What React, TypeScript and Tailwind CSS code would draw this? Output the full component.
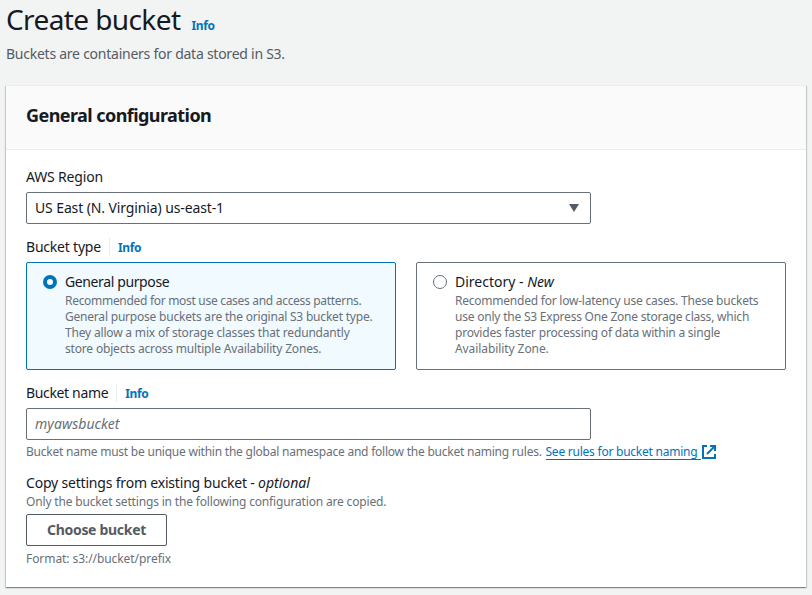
import React from 'react';

function Info({ className = '' }: { className?: string }) {
  return (
    <a className={`text-[12px] leading-5 font-bold tracking-[-0.36px] text-[#0073bb] ${className}`}>Info</a>
  );
}

function Label({ children, info = false }: { children: React.ReactNode; info?: boolean }) {
  return (
    <div className="mb-[5px] flex h-5 items-center text-[14px] leading-5 text-[#16191f]">
      {children}
      {info && (
        <>
          <span className="mr-2 ml-2 h-[18px] w-px bg-[#eaeded]" />
          <Info className="pt-[2px]" />
        </>
      )}
    </div>
  );
}

function Radio({ checked }: { checked: boolean }) {
  return checked ? (
    <span className="mt-[3px] size-[14px] shrink-0 rounded-full border-4 border-[#0073bb] bg-white" />
  ) : (
    <span className="mt-[3px] size-[14px] shrink-0 rounded-full border border-[#687078] bg-white" />
  );
}

function Tile({ checked, title, children }: { checked: boolean; title: React.ReactNode; children: React.ReactNode }) {
  return (
    <div
      className={`flex h-[108px] w-[370px] gap-2 rounded-[2px] border pt-[9px] pl-4 ${
        checked ? 'border-[#0073bb] bg-[#f1faff]' : 'border-[#687078] bg-white'
      }`}
    >
      <Radio checked={checked} />
      <div>
        <div className="h-[21px] text-[14px] leading-5 whitespace-pre text-[#16191f]">{title}</div>
        <div className="text-[12px] leading-4 whitespace-nowrap text-[#687078]">{children}</div>
      </div>
    </div>
  );
}

function ExternalIcon() {
  return (
    <svg className="size-4" viewBox="0 0 16 16" fill="none" stroke="#0073bb" strokeWidth="2">
      <path d="M6 2H2v12h12v-4" />
      <path d="M9 2h5v5" />
      <path d="M14 2 6 10" />
    </svg>
  );
}

export default function App() {
  return (
    <div className="h-[595px] overflow-hidden bg-[#f2f3f3] pt-px pl-[6px] font-['Noto_Sans',sans-serif]">
      <header className="h-[84px]">
        <div className="flex h-9 items-baseline">
          <h1 className="text-[28px] leading-9 tracking-[-0.6px] text-[#16191f]">Create bucket</h1>
          <Info className="ml-[11px]" />
        </div>
        <p className="mt-[7px] text-[14px] leading-5 tracking-[-0.25px] text-[#545b64]">
          Buckets are containers for data stored in S3.
        </p>
      </header>

      <section className="h-[502px] w-[800px] border-t border-[#eaeded] bg-white shadow-[0_1px_1px_0_rgba(0,28,36,0.3),1px_1px_1px_0_rgba(0,28,36,0.15),-1px_1px_1px_0_rgba(0,28,36,0.15)]">
        <div className="h-16 border-b border-[#eaeded] bg-[#fafafa] pt-[18px] pl-[20px]">
          <h2 className="text-[18px] leading-[22px] font-bold tracking-[-0.56px] text-[#16191f]">
            General configuration
          </h2>
        </div>

        <div className="pt-[17px] pl-5">
          <Label>
            <span className="tracking-[-0.169px]">AWS Region</span>
          </Label>
          <div className="mb-[13px] flex h-8 w-[565px] items-center justify-between rounded-[2px] border border-[#687078] pr-[11px] pl-2 text-[14px] leading-5 text-[#16191f]">
            <span className="tracking-[-0.115px]">US East (N. Virginia) us-east-1</span>
            <svg className="h-2 w-[10px]" viewBox="0 0 10 8">
              <path d="M0 0h10L5 8z" fill="#545b64" />
            </svg>
          </div>

          <Label info>
            <span className="tracking-[-0.21px]">Bucket type</span>
          </Label>
          <div className="mb-[13px] flex gap-5">
            <Tile checked title={<span className="tracking-[-0.38px]">General purpose</span>}>
              <p className="tracking-[-0.3px]">Recommended for most use cases and access patterns.</p>
              <p className="tracking-[-0.206px]">General purpose buckets are the original S3 bucket type.</p>
              <p className="tracking-[-0.18px]">They allow a mix of storage classes that redundantly</p>
              <p className="tracking-[-0.175px]">store objects across multiple Availability Zones.</p>
            </Tile>
            <Tile
              checked={false}
              title={
                <>
                  Directory - <em>New</em>
                </>
              }
            >
              <p className="tracking-[-0.228px]">Recommended for low-latency use cases. These buckets</p>
              <p className="tracking-[-0.215px]">use only the S3 Express One Zone storage class, which</p>
              <p className="tracking-[-0.21px]">provides faster processing of data within a single</p>
              <p className="tracking-[-0.08px]">Availability Zone.</p>
            </Tile>
          </div>

          <Label info>
            <span className="tracking-[-0.35px]">Bucket name</span>
          </Label>
          <div className="mb-1 flex h-8 w-[565px] items-center rounded-[2px] border border-[#687078] pl-2 text-[14px] leading-5 tracking-[0.068px] text-[#687078] italic">
            myawsbucket
          </div>
          <div className="mb-[13px] flex h-4 text-[12px] leading-4 whitespace-pre text-[#687078]">
            <span className="w-[519.5px] tracking-[-0.226px]">
              Bucket name must be unique within the global namespace and follow the bucket naming rules.
            </span>
            <a className="h-4 w-[155px] border-b border-[#0073bb] leading-4 tracking-[-0.235px] text-[#0073bb]">
              See rules for bucket naming
            </a>
            <ExternalIcon />
          </div>

          <div className="flex h-[21px] text-[14px] leading-5 whitespace-pre text-[#16191f]">
            <span className="tracking-[-0.189px]">{'Copy settings from existing bucket - '}</span>
            <em>optional</em>
          </div>
          <p className="mb-1 text-[12px] leading-4 tracking-[-0.168px] text-[#687078]">
            Only the bucket settings in the following configuration are copied.
          </p>
          <button className="flex h-8 w-[141px] items-center justify-center rounded-[2px] border border-[#545b64] text-[14px] leading-5 font-bold tracking-[-0.3px] text-[#545b64]">
            Choose bucket
          </button>
          <p className="mt-[5px] text-[12px] leading-4 tracking-[-0.069px] text-[#687078]">Format: s3://bucket/prefix</p>
        </div>
      </section>
    </div>
  );
}
